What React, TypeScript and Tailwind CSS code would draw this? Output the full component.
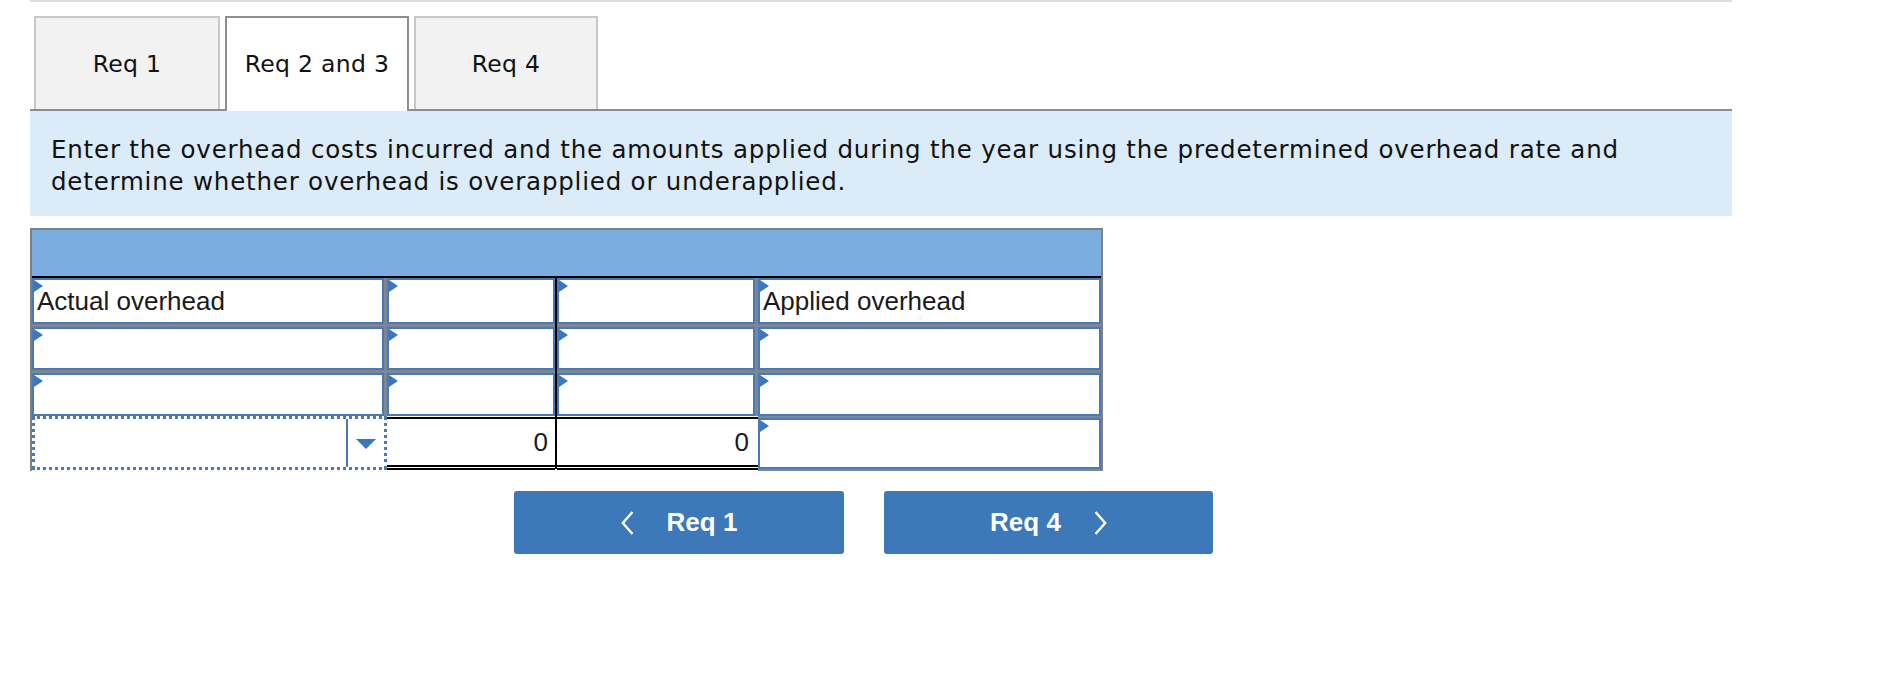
const verdana = "font-['DejaVu_Sans',Verdana,sans-serif]";
const arial = "font-['Liberation_Sans',Arial,Helvetica,sans-serif]";

function Tab({ label, width, active = false }: { label: string; width: string; active?: boolean }) {
  if (active) {
    return (
      <div
        className={`-mb-[2px] flex h-[95px] ${width} items-center justify-center border-2 border-b-0 border-[#8e8e8e] bg-white pb-[2px] pt-[2px] text-[23.5px] tracking-[0.3px] text-[#111] ${verdana}`}
      >
        {label}
      </div>
    );
  }
  return (
    <div
      className={`flex h-[93px] ${width} items-center justify-center border-2 border-b-0 border-[#c8c8c8] bg-[#f2f2f2] pt-[2px] text-[23.5px] tracking-[0.3px] text-[#111] ${verdana}`}
    >
      {label}
    </div>
  );
}

function Flag() {
  return (
    <span className="absolute left-0 top-0 h-0 w-0 border-y-[6px] border-l-[9px] border-y-transparent border-l-[#3b76c2]" />
  );
}

function InputCell({ height, text = "" }: { height: string; text?: string }) {
  return (
    <div className={`relative flex ${height} items-center border-2 border-[#4b79b5] bg-white pl-[3px]`}>
      <Flag />
      <span className={`text-[26px] leading-none text-[#1a1a1a] ${arial}`}>{text}</span>
    </div>
  );
}

function Column({ width, texts }: { width: string; texts: string[] }) {
  const heights = ["h-[46px]", "h-[43px]", "h-[43px]"];
  return (
    <div className={`flex ${width} flex-col gap-[3px]`}>
      {texts.map((t, i) => (
        <InputCell key={i} height={heights[i]} text={t} />
      ))}
    </div>
  );
}

function TotalCell({ width, pad }: { width: string; pad: string }) {
  return (
    <div className={`flex ${width} flex-col bg-white`}>
      <div className="mt-px h-[2px] bg-black" />
      <div className={`flex h-[46px] items-center justify-end ${pad} text-[26px] leading-none text-[#1a1a1a] ${arial}`}>
        0
      </div>
      <div className="h-[1.5px] bg-black" />
      <div className="h-[1.5px]" />
      <div className="h-[1.5px] bg-black" />
    </div>
  );
}

function Chevron({ dir }: { dir: "left" | "right" }) {
  return (
    <svg width="13" height="26" viewBox="0 0 13 26" fill="none">
      <polyline
        points={dir === "left" ? "11.5,2 1.8,13 11.5,24" : "1.5,2 11.2,13 1.5,24"}
        stroke="white"
        strokeWidth="2.4"
        strokeLinejoin="miter"
      />
    </svg>
  );
}

export default function App() {
  return (
    <div className="min-h-[684px] bg-white">
      <div className="ml-[30px] w-[1702px]">
        {/* top rule */}
        <div className="h-[2px] bg-[#dddddd]" />

        {/* tabs */}
        <div className="mt-[14px] flex items-end gap-[5px] border-b-2 border-[#8e8e8e] pl-[4px]">
          <Tab label="Req 1" width="w-[186px]" />
          <Tab label="Req 2 and 3" width="w-[184px]" active />
          <Tab label="Req 4" width="w-[184px]" />
        </div>

        {/* instructions */}
        <div
          className={`bg-[#dcebf8] pb-[18px] pl-[21px] pt-[23px] text-[24.5px] leading-[32px] tracking-[0.8px] text-[#111] ${verdana}`}
        >
          Enter the overhead costs incurred and the amounts applied during the year using the predetermined overhead rate and
          <br />
          determine whether overhead is overapplied or underapplied.
        </div>

        {/* T-account table */}
        <div className="mt-[12px] w-[1073px] border-x-2 border-t-2 border-[#808080]">
          <div className="h-[48px] border-b-2 border-black bg-[#7aade0]" />

          <div className="flex bg-[#7b8794]">
            <Column width="w-[352px]" texts={["Actual overhead", "", ""]} />
            <div className="w-[3px]" />
            <Column width="w-[168px]" texts={["", "", ""]} />
            <div className="w-[2px] bg-black" />
            <Column width="w-[198px]" texts={["", "", ""]} />
            <div className="w-[3px]" />
            <Column width="w-[343px]" texts={["Applied overhead", "", ""]} />
          </div>

          <div className="flex h-[55px]">
            <div className="relative z-10 flex h-[54px] w-[355px] border-[3px] border-dotted border-[#4b79b5] bg-white">
              <div className="flex-1" />
              <div className="w-[2px] bg-[#4b79b5]" />
              <div className="flex w-[36px] items-center justify-center">
                <span className="mt-[2px] h-0 w-0 border-x-[10px] border-t-[10px] border-x-transparent border-t-[#3b76c2]" />
              </div>
            </div>
            <TotalCell width="w-[168px]" pad="pr-[7px]" />
            <div className="h-[53px] w-[2px] bg-black" />
            <TotalCell width="w-[201px]" pad="pr-[9px]" />
            <div className="w-[343px] bg-[#7b8794] py-[2px]">
              <InputCell height="h-[51px]" />
            </div>
          </div>
        </div>

        {/* navigation */}
        <div className={`ml-[484px] mt-[20px] flex gap-[40px] text-[26px] font-bold text-white ${arial}`}>
          <button className="flex h-[63px] w-[330px] items-center justify-center gap-[33px] rounded-[3px] bg-[#3d78b8]">
            <Chevron dir="left" />
            <span>Req 1</span>
          </button>
          <button className="flex h-[63px] w-[329px] items-center justify-center gap-[33px] rounded-[3px] bg-[#3d78b8]">
            <span>Req 4</span>
            <Chevron dir="right" />
          </button>
        </div>
      </div>
    </div>
  );
}
